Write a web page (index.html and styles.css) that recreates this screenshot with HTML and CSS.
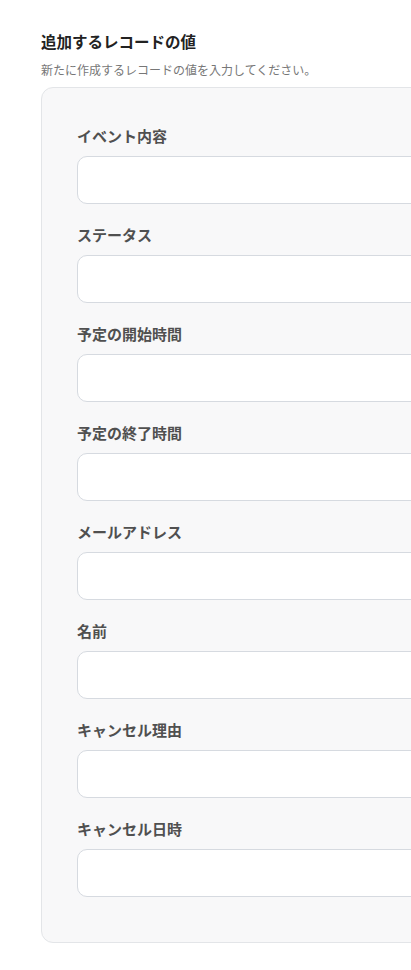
FILE: index.html
```html
<!DOCTYPE html>
<html lang="ja">
<head>
<meta charset="utf-8">
<title>追加するレコードの値</title>
<link rel="stylesheet" href="styles.css">
</head>
<body>
<main class="page">
  <h2 class="title">追加するレコードの値</h2>
  <p class="desc">新たに作成するレコードの値を入力してください。</p>
  <section class="card">
    <div class="field"><label class="label">イベント内容</label><div class="input"></div></div>
    <div class="field"><label class="label">ステータス</label><div class="input"></div></div>
    <div class="field"><label class="label">予定の開始時間</label><div class="input"></div></div>
    <div class="field"><label class="label">予定の終了時間</label><div class="input"></div></div>
    <div class="field"><label class="label">メールアドレス</label><div class="input"></div></div>
    <div class="field"><label class="label">名前</label><div class="input"></div></div>
    <div class="field"><label class="label">キャンセル理由</label><div class="input"></div></div>
    <div class="field"><label class="label">キャンセル日時</label><div class="input"></div></div>
  </section>
</main>
</body>
</html>
```
FILE: styles.css
```css
html, body {
  margin: 0;
  padding: 0;
  background: #ffffff;
}
body {
  font-family: "Noto Sans CJK JP", "Noto Sans", sans-serif;
}
.page {
  box-sizing: border-box;
  width: 411px;
  height: 970px;
  overflow: hidden;
  padding: 31px 0 0 41px;
}
.title {
  margin: 0;
  font-size: 15.5px;
  line-height: 20px;
  font-weight: 700;
  color: #222222;
}
.desc {
  margin: 11px 0 0;
  font-size: 12px;
  line-height: 16px;
  color: #777777;
}
.card {
  margin-top: 9px;
  box-sizing: border-box;
  width: 480px;
  background: #f8f8f9;
  border: 1px solid #e3e5e8;
  border-radius: 12px;
  padding: 39px 36px 45px 35px;
  display: flex;
  flex-direction: column;
  gap: 22px;
}
.field {
  display: flex;
  flex-direction: column;
  gap: 11px;
}
.label {
  font-size: 15px;
  line-height: 18px;
  font-weight: 700;
  color: #505050;
}
.input {
  height: 48px;
  box-sizing: border-box;
  background: #ffffff;
  border: 1px solid #d6dae0;
  border-radius: 10px;
}
```
